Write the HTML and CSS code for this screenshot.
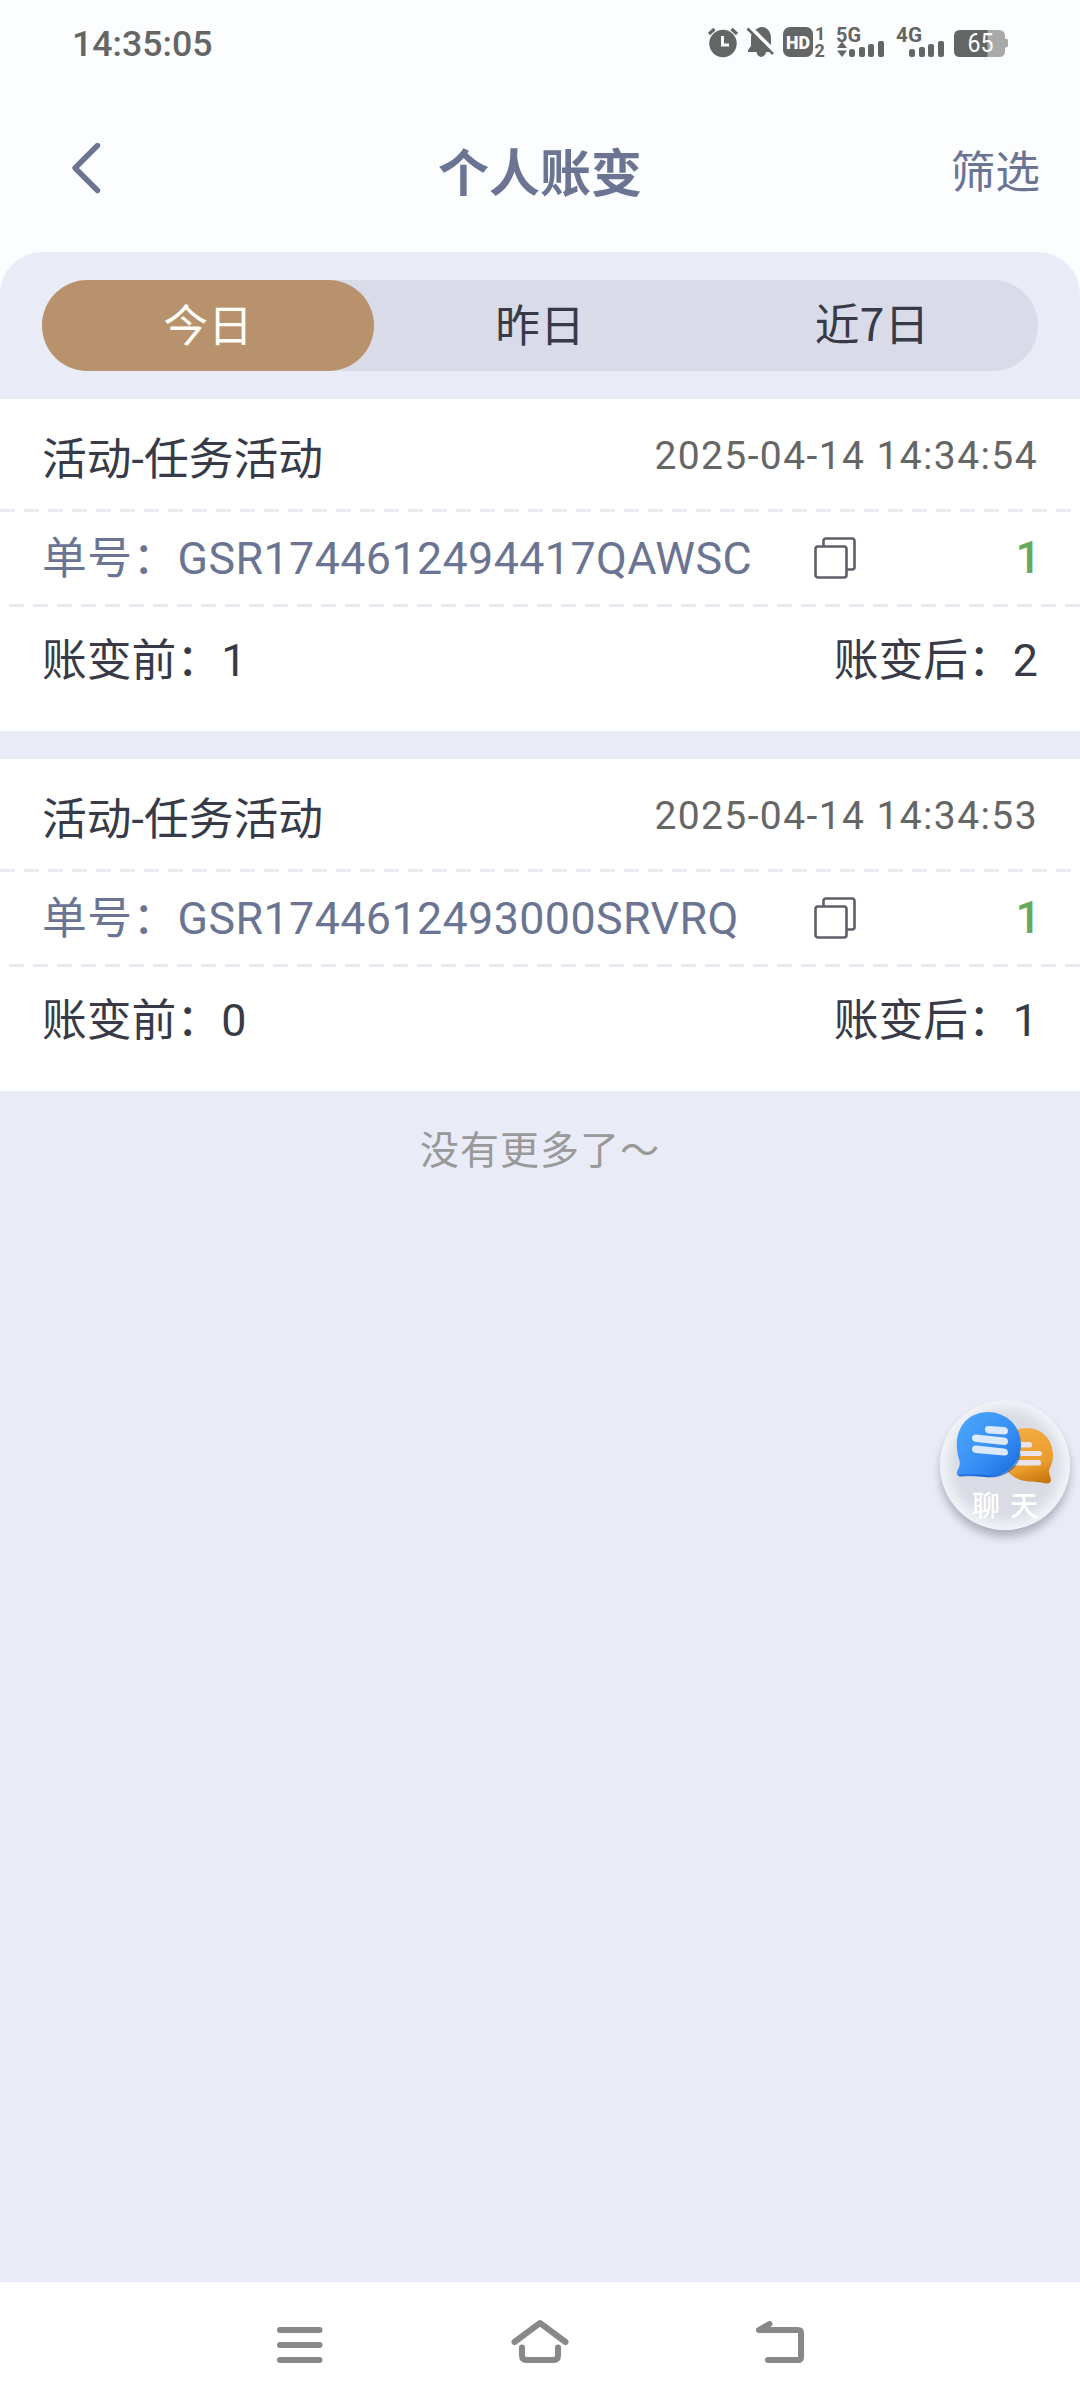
FILE: index.html
```html
<!DOCTYPE html>
<html lang="zh-CN">
<head>
  <meta charset="UTF-8" />
  <meta name="viewport" content="width=device-width, initial-scale=1.0"/>
  <title>个人账变</title>
  <link rel="stylesheet" href="styles.css">
</head>
<body>
  <div class="status-bar">
    <span class="clock">14:35:05</span>
    <svg class="status-icons" width="304" height="36" viewBox="706 24 304 36">
      <!-- alarm -->
      <g fill="#646565">
        <circle cx="723" cy="43.500" r="13.700"/>
        <path d="M709 34l5.500-5M737 34l-5.500-5" stroke="#646565" stroke-width="3.200"/>
        <path d="M722.500 36v9h6.500" fill="none" stroke="#fcfdff" stroke-width="3"/>
      </g>
      <!-- muted bell -->
      <g fill="#646565">
        <path d="M748 52v-2l3-4V38c0-5 3-8.500 6.500-9.500 6-4 13.500 1 13.500 9.500v14h-5c-1 6.500-8.500 6.500-9.500 0z"/>
        <path d="M749 26l27 27" stroke="#fcfdff" stroke-width="4"/>
        <path d="M747.500 28.500l25.500 25.500" stroke="#646565" stroke-width="2.600"/>
      </g>
      <!-- HD 1/2 -->
      <rect x="783" y="27" width="30" height="30" rx="7" fill="#646565"/>
      <text class="hd" x="786" y="49" textLength="24" lengthAdjust="spacingAndGlyphs">HD</text>
      <text class="sim" x="815" y="40">1</text>
      <text class="sim" x="814.500" y="57">2</text>
      <!-- 5G -->
      <text class="net" x="836" y="41.500" textLength="25" lengthAdjust="spacingAndGlyphs">5G</text>
      <path d="M837 48l5-6.500 5 6.500zM837 50.500h10l-5 6.500z" fill="#646565"/>
      <g fill="#646565">
        <rect x="849" y="49" width="6" height="8" rx="2.500"/>
        <rect x="859" y="47" width="6" height="10" rx="2"/>
        <rect x="868" y="44" width="6" height="13" rx="2"/>
        <rect x="878" y="41" width="6" height="16" rx="2"/>
      </g>
      <!-- 4G -->
      <text class="net" x="896" y="41.500" textLength="26" lengthAdjust="spacingAndGlyphs">4G</text>
      <g fill="#646565">
        <rect x="909" y="49" width="6" height="8" rx="2.500"/>
        <rect x="919" y="47" width="6" height="10" rx="2"/>
        <rect x="928" y="44" width="6" height="13" rx="2"/>
        <rect x="938" y="41" width="6" height="16" rx="2"/>
      </g>
      <!-- battery -->
      <path d="M987 30h12q6 0 6 6v2.500q3 0 3 2v5q0 2-3 2V51q0 6-6 6h-12z" fill="#a8a9a9"/>
      <path d="M987.500 30h-27.500q-6 0-6 6v15q0 6 6 6h27.500z" fill="#646565"/>
      <text class="battery" x="967.500" y="52" textLength="26" lengthAdjust="spacingAndGlyphs">65</text>
    </svg>
  </div>

  <div class="header">
    <a class="back" href="#">
      <svg width="32" height="54" viewBox="0 0 32 54"><path d="M27.500 4.500L5 27l22.500 22.500" fill="none" stroke="#6b7492" stroke-width="5.400" stroke-linecap="round" stroke-linejoin="round"/></svg>
    </a>
    <h1>个人账变</h1>
    <a class="filter" href="#">筛选</a>
  </div>

  <div class="main">
    <div class="tabs">
      <div class="tab active">今日</div>
      <div class="tab">昨日</div>
      <div class="tab mixed">近7日</div>
    </div>

    <div class="card">
      <div class="row title-row">
        <span>活动-任务活动</span>
        <span class="time">2025-04-14 14:34:54</span>
      </div>
      <div class="row order-row">
        <span class="order">单号：GSR1744612494417QAWSC</span>
        <svg class="copy" width="42" height="42" viewBox="0 0 42 42" fill="none" stroke="#5d606b" stroke-width="2.600"><rect x="1.500" y="9.500" width="31" height="31" rx="2.500"/><path d="M9.500 9.500V4q0-2.500 2.500-2.500h26q2.500 0 2.500 2.500v26q0 2.500-2.500 2.500h-5.500"/></svg>
        <span class="amount">1</span>
      </div>
      <div class="row balance-row">
        <span>账变前：1</span>
        <span>账变后：2</span>
      </div>
    </div>

    <div class="card">
      <div class="row title-row">
        <span>活动-任务活动</span>
        <span class="time">2025-04-14 14:34:53</span>
      </div>
      <div class="row order-row">
        <span class="order">单号：GSR1744612493000SRVRQ</span>
        <svg class="copy" width="42" height="42" viewBox="0 0 42 42" fill="none" stroke="#5d606b" stroke-width="2.600"><rect x="1.500" y="9.500" width="31" height="31" rx="2.500"/><path d="M9.500 9.500V4q0-2.500 2.500-2.500h26q2.500 0 2.500 2.500v26q0 2.500-2.500 2.500h-5.500"/></svg>
        <span class="amount">1</span>
      </div>
      <div class="row balance-row">
        <span>账变前：0</span>
        <span>账变后：1</span>
      </div>
    </div>

    <p class="no-more">没有更多了～</p>
  </div>

  <div class="chat">
    <svg width="130" height="130" viewBox="0 0 130 130">
      <defs>
        <linearGradient id="blue" x1="0" y1="0" x2="1" y2="1">
          <stop offset="0" stop-color="#4ea9fb"/>
          <stop offset="0.600" stop-color="#358df4"/>
          <stop offset="1" stop-color="#1565d8"/>
        </linearGradient>
        <linearGradient id="orange" x1="0.300" y1="0" x2="0.600" y2="1">
          <stop offset="0" stop-color="#f3ab42"/>
          <stop offset="0.700" stop-color="#eb9d2d"/>
          <stop offset="1" stop-color="#c9780f"/>
        </linearGradient>
      </defs>
      <path d="M87 28C102 28 113 40 113 55c0 6-2 11-4 15 0 5 2 7 2 11q-1 3-5 2.500c-7-1.500-12-2-17-2C76 81 62 72 62 55S72 28 87 28z" fill="url(#orange)"/>
      <g fill="#e9e4ea">
        <rect x="74" y="42" width="18" height="5.500" rx="2.500"/>
        <rect x="72" y="51" width="30" height="5" rx="2.500"/>
        <rect x="72" y="60" width="29" height="5.500" rx="2.500"/>
      </g>
      <path d="M49 12a32.500 32.500 0 1 1-1 65c-8 0-14-2-26-1q-6 1-5-4c2-5 4-8 2-13C12 36 22 12 49 12z" fill="url(#blue)"/>
      <path d="M19 75.500c10 0 18-1.500 29 1 16 1 29-8 32-23" fill="none" stroke="#1259c9" stroke-opacity="0.600" stroke-width="2"/>
      <g fill="#dce9fb">
        <path d="M48 26l16 1q4 .500 4 4t-4 3.500l-15-1q-4-.500-4-4t3-3.500z"/>
        <path d="M36 34.500l28 3q4 .500 4 4t-4 3.500l-28-3q-4-.500-4-4t4-3.500z"/>
        <path d="M36 45.500l28 3q4 .500 4 4t-4 3l-28-2.500q-4-.500-4-4t4-3.500z"/>
      </g>
    </svg>
    <span class="chat-label">聊 天</span>
  </div>

  <div class="nav">
    <svg width="60" height="60" viewBox="270 2315 60 60"><path d="M280 2330h39.500M280 2345h39.500M280 2360h39.500"/></svg>
    <svg width="60" height="60" viewBox="510 2315 60 60"><path d="M514.500 2342l25.500-19 25.500 19M522 2347.500v8q0 4.500 4.500 4.500h27q4.500 0 4.500-4.500v-8"/></svg>
    <svg width="60" height="60" viewBox="750 2315 60 60"><path d="M769.500 2324l-10.500 6h39q3 0 3 3v24q0 3-3 3h-30"/></svg>
  </div>
</body>
</html>
```
FILE: styles.css
```css
* {
  box-sizing: border-box;
}
body {
  margin: 0;
  height: 2408px;
  display: flex;
  flex-direction: column;
  position: relative;
  background: #fcfdff;
  color: #383b47;
  font-family: Roboto, "Noto Sans CJK SC", sans-serif;
  font-size: 44.8px;
}
a {
  color: inherit;
  text-decoration: none;
}

/* status bar */
.status-bar {
  height: 84px;
  padding: 0 70px 0 72px;
  display: flex;
  align-items: center;
  justify-content: space-between;
}
.clock {
  font-size: 35.7px;
  font-weight: 500;
  color: #646565;
  padding-top: 3px;
}
.status-icons text {
  font-family: Roboto, sans-serif;
  font-weight: 700;
  fill: #646565;
}
.status-icons .hd {
  font-size: 19px;
  font-weight: 900;
  fill: #fcfdff;
}
.status-icons .sim {
  font-size: 18px;
}
.status-icons .net {
  font-size: 20.5px;
}
.status-icons .battery {
  font-size: 25px;
  font-weight: 400;
  fill: #fcfdff;
}

/* header */
.header {
  height: 168px;
  padding: 0 40px 0 70px;
  display: grid;
  grid-template-columns: 1fr auto 1fr;
  align-items: center;
  color: #6b7492;
}
.back svg {
  display: block;
}
.header h1 {
  margin: 0 15px 0 -15px;
  padding-top: 3px;
  font-size: 51px;
  font-weight: 700;
}
.filter {
  justify-self: end;
}

/* content */
.main {
  flex: 1;
  background: #e9ecf6;
  border-radius: 42px 42px 0 0;
}
.tabs {
  height: 91px;
  margin: 28px 42px;
  display: flex;
  border-radius: 46px;
  background: #d9dce8;
}
.tab {
  flex: 1;
  line-height: 93px;
  text-align: center;
  border-radius: 46px;
}
.tab.active {
  background: #b8926c;
  color: #fffdf8;
}
.tab.mixed {
  font-family: "Noto Sans CJK SC", sans-serif;
  line-height: 83px;
}
.card {
  height: 332px;
  margin-bottom: 28px;
  background: #fff;
}
.row {
  display: flex;
  align-items: center;
  padding: 0 42px;
  justify-content: space-between;
}
.title-row,
.order-row {
  background: repeating-linear-gradient(to right, #e9ebf1 0 15px, transparent 15px 24px) left bottom / 100% 3px no-repeat;
}
.title-row {
  height: 113px;
}
.order-row {
  height: 95px;
  padding-bottom: 4px;
  color: #6b7492;
  background-position: 9px bottom;
}
.balance-row {
  height: 98px;
}
.time {
  font-size: 39px;
  letter-spacing: 1.4px;
  color: #666;
}
.order {
  width: 772px;
  padding-bottom: 7px;
  letter-spacing: 0.4px;
  white-space: nowrap;
}
.copy {
  margin-right: auto;
}
.amount {
  margin-right: -3px;
  color: #69a95e;
  font-weight: 500;
}
.no-more {
  margin: 0;
  text-align: center;
  font-size: 39px;
  letter-spacing: 1px;
  color: #999;
}

/* floating chat button */
.chat {
  position: absolute;
  left: 940px;
  top: 1400px;
  width: 130px;
  height: 130px;
  border-radius: 50%;
  background: #d9dce4;
  box-shadow: inset 0 0 12px 8px #f2f4f9, 0 7px 9px rgba(90, 95, 110, 0.4);
}
.chat-label {
  position: absolute;
  left: 0;
  bottom: 7px;
  width: 100%;
  text-align: center;
  font-size: 28px;
  line-height: 32px;
  word-spacing: 3px;
  font-weight: 500;
  color: #fff;
}

/* system navigation */
.nav {
  height: 126px;
  padding: 0 180px;
  display: flex;
  justify-content: space-around;
  align-items: center;
  background: #fff;
}
.nav path {
  fill: none;
  stroke: #888;
  stroke-width: 6;
  stroke-linecap: round;
  stroke-linejoin: round;
}
```
